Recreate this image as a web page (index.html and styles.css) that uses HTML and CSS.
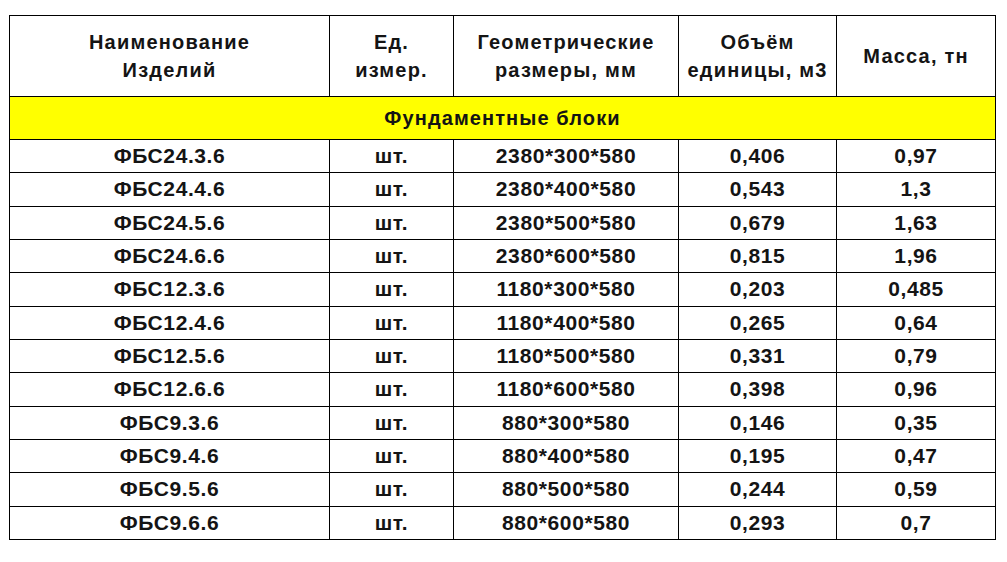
FILE: index.html
```html
<!DOCTYPE html>
<html lang="ru">
<head>
<meta charset="utf-8">
<title>ФБС</title>
<link rel="stylesheet" href="styles.css">
</head>
<body>
<table class="spec">
  <colgroup>
    <col class="c1"><col class="c2"><col class="c3"><col class="c4"><col class="c5">
  </colgroup>
  <thead>
    <tr class="head">
      <th>Наименование<br>Изделий</th>
      <th>Ед.<br>измер.</th>
      <th>Геометрические<br>размеры, мм</th>
      <th>Объём<br>единицы, м3</th>
      <th>Масса, тн</th>
    </tr>
  </thead>
  <tbody>
    <tr class="group"><td colspan="5">Фундаментные блоки</td></tr>
    <tr><td>ФБС24.3.6</td><td>шт.</td><td>2380*300*580</td><td>0,406</td><td>0,97</td></tr>
    <tr><td>ФБС24.4.6</td><td>шт.</td><td>2380*400*580</td><td>0,543</td><td>1,3</td></tr>
    <tr><td>ФБС24.5.6</td><td>шт.</td><td>2380*500*580</td><td>0,679</td><td>1,63</td></tr>
    <tr><td>ФБС24.6.6</td><td>шт.</td><td>2380*600*580</td><td>0,815</td><td>1,96</td></tr>
    <tr><td>ФБС12.3.6</td><td>шт.</td><td>1180*300*580</td><td>0,203</td><td>0,485</td></tr>
    <tr><td>ФБС12.4.6</td><td>шт.</td><td>1180*400*580</td><td>0,265</td><td>0,64</td></tr>
    <tr><td>ФБС12.5.6</td><td>шт.</td><td>1180*500*580</td><td>0,331</td><td>0,79</td></tr>
    <tr><td>ФБС12.6.6</td><td>шт.</td><td>1180*600*580</td><td>0,398</td><td>0,96</td></tr>
    <tr><td>ФБС9.3.6</td><td>шт.</td><td>880*300*580</td><td>0,146</td><td>0,35</td></tr>
    <tr><td>ФБС9.4.6</td><td>шт.</td><td>880*400*580</td><td>0,195</td><td>0,47</td></tr>
    <tr><td>ФБС9.5.6</td><td>шт.</td><td>880*500*580</td><td>0,244</td><td>0,59</td></tr>
    <tr><td>ФБС9.6.6</td><td>шт.</td><td>880*600*580</td><td>0,293</td><td>0,7</td></tr>
  </tbody>
</table>
</body>
</html>
```
FILE: styles.css
```css
html, body {
  margin: 0;
  padding: 0;
  background: #ffffff;
}
body {
  padding: 15px 0 0 9px;
  font-family: "Liberation Sans", Arial, sans-serif;
  color: #141414;
}
.spec {
  border-collapse: collapse;
  table-layout: fixed;
  width: 986px;
}
.c1 { width: 320px; }
.c2 { width: 124px; }
.c3 { width: 225px; }
.c4 { width: 158px; }
.c5 { width: 159px; }
.spec th, .spec td {
  border: 1px solid #000;
  padding: 0;
  text-align: center;
  vertical-align: middle;
  font-weight: bold;
  white-space: nowrap;
}
.spec th {
  height: 80px;
  font-size: 20px;
  line-height: 28px;
  letter-spacing: 1.2px;
}
.group td {
  height: 42px;
  background: #ffff00;
  font-size: 20px;
  letter-spacing: 1.1px;
}
.spec tbody tr:not(.group) td {
  height: 32.33px;
  font-size: 21px;
  letter-spacing: 0.6px;
  line-height: 24px;
}
```
